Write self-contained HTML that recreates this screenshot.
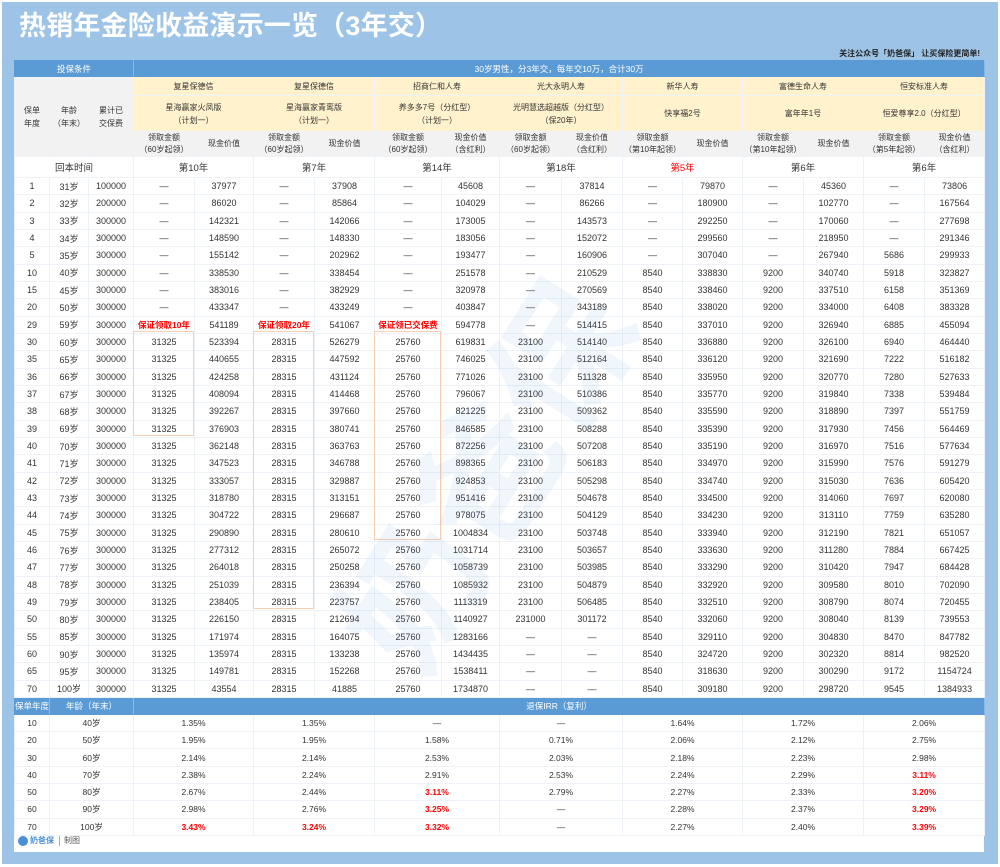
<!DOCTYPE html>
<html><head><meta charset="utf-8"><style>
*{margin:0;padding:0;box-sizing:border-box}
body{width:1000px;height:867px;background:#fff;font-family:"Liberation Sans","Noto Sans CJK SC",sans-serif;position:relative;overflow:hidden}
#bg{position:absolute;left:2px;top:2px;width:996px;height:862px;background:#9dc3e6}
#title{position:absolute;left:19px;top:6px;color:#fff;font-size:27px;font-weight:bold;line-height:40px;letter-spacing:0.2px}
#note{position:absolute;right:20px;top:48px;font-size:8px;font-weight:bold;color:#222}
#panel{position:absolute;left:14px;top:60px;width:970px;height:792px;background:#fff}
table{border-collapse:collapse;table-layout:fixed;width:970px;position:absolute;left:0;top:0}
td{border:1px solid #edf2f8;text-align:center;font-size:9px;color:#333;padding:0;overflow:hidden;white-space:nowrap}
tr.d td{height:17.33px}
.bh td{background:#5b9bd5;color:#fff;font-size:8.5px;border-color:#5b9bd5;border-right-color:#8db8e3}
.cr{background:#fff2cc;font-size:8px}
.gr{background:#f2f2f2;font-size:8px;line-height:12px}
.lh{background:#f2f2f2;font-size:8px;line-height:13px}
.r{color:#f00}
.rb{color:#f00;font-weight:bold;font-size:8.5px}
.hb td{font-size:9.5px;height:21px}
.ir td{height:17.3px;font-size:8.5px}
.box{position:absolute;border:1px solid #f6cfb2}
#wm{position:absolute;left:270px;top:370px;font-size:140px;font-weight:bold;color:rgba(91,155,213,0.09);transform:rotate(-58deg);white-space:nowrap;pointer-events:none}
</style></head><body>
<div id="bg"></div>
<div id="title">热销年金险收益演示一览（3年交）</div>
<div id="note">关注公众号「奶爸保」 让买保险更简单!</div>
<div id="panel">
<table>
<colgroup><col style="width:35px"><col style="width:39px"><col style="width:45px"><col style="width:61px"><col style="width:59px"><col style="width:61px"><col style="width:60px"><col style="width:67px"><col style="width:58px"><col style="width:62px"><col style="width:61px"><col style="width:60px"><col style="width:60px"><col style="width:61px"><col style="width:60px"><col style="width:61px"><col style="width:60px"></colgroup>
<tr class="bh" style="height:16px"><td colspan="3">投保条件</td><td colspan="14">30岁男性，分3年交，每年交10万，合计30万</td></tr>
<tr style="height:19px"><td rowspan="3" class="lh">保单<br>年度</td><td rowspan="3" class="lh">年龄<br>（年末）</td><td rowspan="3" class="lh">累计已<br>交保费</td><td colspan="2" class="cr">复星保德信</td><td colspan="2" class="cr">复星保德信</td><td colspan="2" class="cr">招商仁和人寿</td><td colspan="2" class="cr">光大永明人寿</td><td colspan="2" class="cr">新华人寿</td><td colspan="2" class="cr">富德生命人寿</td><td colspan="2" class="cr">恒安标准人寿</td></tr>
<tr style="height:36px"><td colspan="2" class="cr" style="line-height:13px">星海赢家火凤版<br>（计划一）</td><td colspan="2" class="cr" style="line-height:13px">星海赢家青鸾版<br>（计划一）</td><td colspan="2" class="cr" style="line-height:13px">养多多7号（分红型）<br>（计划一）</td><td colspan="2" class="cr" style="line-height:13px">光明慧选超越版（分红型）<br>（保20年）</td><td colspan="2" class="cr">快享福2号</td><td colspan="2" class="cr">富年年1号</td><td colspan="2" class="cr">恒爱尊享2.0（分红型）</td></tr>
<tr style="height:25px"><td class="gr">领取金额<br>（60岁起领）</td><td class="gr">现金价值</td><td class="gr">领取金额<br>（60岁起领）</td><td class="gr">现金价值</td><td class="gr">领取金额<br>（60岁起领）</td><td class="gr">现金价值<br>（含红利）</td><td class="gr">领取金额<br>（60岁起领）</td><td class="gr">现金价值<br>（含红利）</td><td class="gr">领取金额<br>（第10年起领）</td><td class="gr">现金价值</td><td class="gr">领取金额<br>（第10年起领）</td><td class="gr">现金价值</td><td class="gr">领取金额<br>（第5年起领）</td><td class="gr">现金价值<br>（含红利）</td></tr>
<tr class="hb"><td colspan="3">回本时间</td><td colspan="2">第10年</td><td colspan="2">第7年</td><td colspan="2">第14年</td><td colspan="2">第18年</td><td colspan="2" class="r">第5年</td><td colspan="2">第6年</td><td colspan="2">第6年</td></tr>
<tr class="d"><td>1</td><td>31岁</td><td>100000</td><td>—</td><td>37977</td><td>—</td><td>37908</td><td>—</td><td>45608</td><td>—</td><td>37814</td><td>—</td><td>79870</td><td>—</td><td>45360</td><td>—</td><td>73806</td></tr>
<tr class="d"><td>2</td><td>32岁</td><td>200000</td><td>—</td><td>86020</td><td>—</td><td>85864</td><td>—</td><td>104029</td><td>—</td><td>86266</td><td>—</td><td>180900</td><td>—</td><td>102770</td><td>—</td><td>167564</td></tr>
<tr class="d"><td>3</td><td>33岁</td><td>300000</td><td>—</td><td>142321</td><td>—</td><td>142066</td><td>—</td><td>173005</td><td>—</td><td>143573</td><td>—</td><td>292250</td><td>—</td><td>170060</td><td>—</td><td>277698</td></tr>
<tr class="d"><td>4</td><td>34岁</td><td>300000</td><td>—</td><td>148590</td><td>—</td><td>148330</td><td>—</td><td>183056</td><td>—</td><td>152072</td><td>—</td><td>299560</td><td>—</td><td>218950</td><td>—</td><td>291346</td></tr>
<tr class="d"><td>5</td><td>35岁</td><td>300000</td><td>—</td><td>155142</td><td>—</td><td>202962</td><td>—</td><td>193477</td><td>—</td><td>160906</td><td>—</td><td>307040</td><td>—</td><td>267940</td><td>5686</td><td>299933</td></tr>
<tr class="d"><td>10</td><td>40岁</td><td>300000</td><td>—</td><td>338530</td><td>—</td><td>338454</td><td>—</td><td>251578</td><td>—</td><td>210529</td><td>8540</td><td>338830</td><td>9200</td><td>340740</td><td>5918</td><td>323827</td></tr>
<tr class="d"><td>15</td><td>45岁</td><td>300000</td><td>—</td><td>383016</td><td>—</td><td>382929</td><td>—</td><td>320978</td><td>—</td><td>270569</td><td>8540</td><td>338460</td><td>9200</td><td>337510</td><td>6158</td><td>351369</td></tr>
<tr class="d"><td>20</td><td>50岁</td><td>300000</td><td>—</td><td>433347</td><td>—</td><td>433249</td><td>—</td><td>403847</td><td>—</td><td>343189</td><td>8540</td><td>338020</td><td>9200</td><td>334000</td><td>6408</td><td>383328</td></tr>
<tr class="d"><td>29</td><td>59岁</td><td>300000</td><td class="rb">保证领取10年</td><td>541189</td><td class="rb">保证领取20年</td><td>541067</td><td class="rb">保证领已交保费</td><td>594778</td><td>—</td><td>514415</td><td>8540</td><td>337010</td><td>9200</td><td>326940</td><td>6885</td><td>455094</td></tr>
<tr class="d"><td>30</td><td>60岁</td><td>300000</td><td>31325</td><td>523394</td><td>28315</td><td>526279</td><td>25760</td><td>619831</td><td>23100</td><td>514140</td><td>8540</td><td>336880</td><td>9200</td><td>326100</td><td>6940</td><td>464440</td></tr>
<tr class="d"><td>35</td><td>65岁</td><td>300000</td><td>31325</td><td>440655</td><td>28315</td><td>447592</td><td>25760</td><td>746025</td><td>23100</td><td>512164</td><td>8540</td><td>336120</td><td>9200</td><td>321690</td><td>7222</td><td>516182</td></tr>
<tr class="d"><td>36</td><td>66岁</td><td>300000</td><td>31325</td><td>424258</td><td>28315</td><td>431124</td><td>25760</td><td>771026</td><td>23100</td><td>511328</td><td>8540</td><td>335950</td><td>9200</td><td>320770</td><td>7280</td><td>527633</td></tr>
<tr class="d"><td>37</td><td>67岁</td><td>300000</td><td>31325</td><td>408094</td><td>28315</td><td>414468</td><td>25760</td><td>796067</td><td>23100</td><td>510386</td><td>8540</td><td>335770</td><td>9200</td><td>319840</td><td>7338</td><td>539484</td></tr>
<tr class="d"><td>38</td><td>68岁</td><td>300000</td><td>31325</td><td>392267</td><td>28315</td><td>397660</td><td>25760</td><td>821225</td><td>23100</td><td>509362</td><td>8540</td><td>335590</td><td>9200</td><td>318890</td><td>7397</td><td>551759</td></tr>
<tr class="d"><td>39</td><td>69岁</td><td>300000</td><td>31325</td><td>376903</td><td>28315</td><td>380741</td><td>25760</td><td>846585</td><td>23100</td><td>508288</td><td>8540</td><td>335390</td><td>9200</td><td>317930</td><td>7456</td><td>564469</td></tr>
<tr class="d"><td>40</td><td>70岁</td><td>300000</td><td>31325</td><td>362148</td><td>28315</td><td>363763</td><td>25760</td><td>872256</td><td>23100</td><td>507208</td><td>8540</td><td>335190</td><td>9200</td><td>316970</td><td>7516</td><td>577634</td></tr>
<tr class="d"><td>41</td><td>71岁</td><td>300000</td><td>31325</td><td>347523</td><td>28315</td><td>346788</td><td>25760</td><td>898365</td><td>23100</td><td>506183</td><td>8540</td><td>334970</td><td>9200</td><td>315990</td><td>7576</td><td>591279</td></tr>
<tr class="d"><td>42</td><td>72岁</td><td>300000</td><td>31325</td><td>333057</td><td>28315</td><td>329887</td><td>25760</td><td>924853</td><td>23100</td><td>505298</td><td>8540</td><td>334740</td><td>9200</td><td>315030</td><td>7636</td><td>605420</td></tr>
<tr class="d"><td>43</td><td>73岁</td><td>300000</td><td>31325</td><td>318780</td><td>28315</td><td>313151</td><td>25760</td><td>951416</td><td>23100</td><td>504678</td><td>8540</td><td>334500</td><td>9200</td><td>314060</td><td>7697</td><td>620080</td></tr>
<tr class="d"><td>44</td><td>74岁</td><td>300000</td><td>31325</td><td>304722</td><td>28315</td><td>296687</td><td>25760</td><td>978075</td><td>23100</td><td>504129</td><td>8540</td><td>334230</td><td>9200</td><td>313110</td><td>7759</td><td>635280</td></tr>
<tr class="d"><td>45</td><td>75岁</td><td>300000</td><td>31325</td><td>290890</td><td>28315</td><td>280610</td><td>25760</td><td>1004834</td><td>23100</td><td>503748</td><td>8540</td><td>333940</td><td>9200</td><td>312190</td><td>7821</td><td>651057</td></tr>
<tr class="d"><td>46</td><td>76岁</td><td>300000</td><td>31325</td><td>277312</td><td>28315</td><td>265072</td><td>25760</td><td>1031714</td><td>23100</td><td>503657</td><td>8540</td><td>333630</td><td>9200</td><td>311280</td><td>7884</td><td>667425</td></tr>
<tr class="d"><td>47</td><td>77岁</td><td>300000</td><td>31325</td><td>264018</td><td>28315</td><td>250258</td><td>25760</td><td>1058739</td><td>23100</td><td>503985</td><td>8540</td><td>333290</td><td>9200</td><td>310420</td><td>7947</td><td>684428</td></tr>
<tr class="d"><td>48</td><td>78岁</td><td>300000</td><td>31325</td><td>251039</td><td>28315</td><td>236394</td><td>25760</td><td>1085932</td><td>23100</td><td>504879</td><td>8540</td><td>332920</td><td>9200</td><td>309580</td><td>8010</td><td>702090</td></tr>
<tr class="d"><td>49</td><td>79岁</td><td>300000</td><td>31325</td><td>238405</td><td>28315</td><td>223757</td><td>25760</td><td>1113319</td><td>23100</td><td>506485</td><td>8540</td><td>332510</td><td>9200</td><td>308790</td><td>8074</td><td>720455</td></tr>
<tr class="d"><td>50</td><td>80岁</td><td>300000</td><td>31325</td><td>226150</td><td>28315</td><td>212694</td><td>25760</td><td>1140927</td><td>231000</td><td>301172</td><td>8540</td><td>332060</td><td>9200</td><td>308040</td><td>8139</td><td>739553</td></tr>
<tr class="d"><td>55</td><td>85岁</td><td>300000</td><td>31325</td><td>171974</td><td>28315</td><td>164075</td><td>25760</td><td>1283166</td><td>—</td><td>—</td><td>8540</td><td>329110</td><td>9200</td><td>304830</td><td>8470</td><td>847782</td></tr>
<tr class="d"><td>60</td><td>90岁</td><td>300000</td><td>31325</td><td>135974</td><td>28315</td><td>133238</td><td>25760</td><td>1434435</td><td>—</td><td>—</td><td>8540</td><td>324720</td><td>9200</td><td>302320</td><td>8814</td><td>982520</td></tr>
<tr class="d"><td>65</td><td>95岁</td><td>300000</td><td>31325</td><td>149781</td><td>28315</td><td>152268</td><td>25760</td><td>1538411</td><td>—</td><td>—</td><td>8540</td><td>318630</td><td>9200</td><td>300290</td><td>9172</td><td>1154724</td></tr>
<tr class="d"><td>70</td><td>100岁</td><td>300000</td><td>31325</td><td>43554</td><td>28315</td><td>41885</td><td>25760</td><td>1734870</td><td>—</td><td>—</td><td>8540</td><td>309180</td><td>9200</td><td>298720</td><td>9545</td><td>1384933</td></tr>
<tr class="bh" style="height:17px"><td>保单年度</td><td colspan="2">年龄（年末）</td><td colspan="14">退保IRR（复利）</td></tr>
<tr class="ir"><td>10</td><td colspan="2">40岁</td><td colspan="2">1.35%</td><td colspan="2">1.35%</td><td colspan="2">—</td><td colspan="2">—</td><td colspan="2">1.64%</td><td colspan="2">1.72%</td><td colspan="2">2.06%</td></tr>
<tr class="ir"><td>20</td><td colspan="2">50岁</td><td colspan="2">1.95%</td><td colspan="2">1.95%</td><td colspan="2">1.58%</td><td colspan="2">0.71%</td><td colspan="2">2.06%</td><td colspan="2">2.12%</td><td colspan="2">2.75%</td></tr>
<tr class="ir"><td>30</td><td colspan="2">60岁</td><td colspan="2">2.14%</td><td colspan="2">2.14%</td><td colspan="2">2.53%</td><td colspan="2">2.03%</td><td colspan="2">2.18%</td><td colspan="2">2.23%</td><td colspan="2">2.98%</td></tr>
<tr class="ir"><td>40</td><td colspan="2">70岁</td><td colspan="2">2.38%</td><td colspan="2">2.24%</td><td colspan="2">2.91%</td><td colspan="2">2.53%</td><td colspan="2">2.24%</td><td colspan="2">2.29%</td><td colspan="2" class="rb">3.11%</td></tr>
<tr class="ir"><td>50</td><td colspan="2">80岁</td><td colspan="2">2.67%</td><td colspan="2">2.44%</td><td colspan="2" class="rb">3.11%</td><td colspan="2">2.79%</td><td colspan="2">2.27%</td><td colspan="2">2.33%</td><td colspan="2" class="rb">3.20%</td></tr>
<tr class="ir"><td>60</td><td colspan="2">90岁</td><td colspan="2">2.98%</td><td colspan="2">2.76%</td><td colspan="2" class="rb">3.25%</td><td colspan="2">—</td><td colspan="2">2.28%</td><td colspan="2">2.37%</td><td colspan="2" class="rb">3.29%</td></tr>
<tr class="ir"><td>70</td><td colspan="2">100岁</td><td colspan="2" class="rb">3.43%</td><td colspan="2" class="rb">3.24%</td><td colspan="2" class="rb">3.32%</td><td colspan="2">—</td><td colspan="2">2.27%</td><td colspan="2">2.40%</td><td colspan="2" class="rb">3.39%</td></tr>
</table>
<div class="box" style="left:119px;top:271px;width:61px;height:105px"></div>
<div class="box" style="left:239px;top:271px;width:61px;height:278px"></div>
<div class="box" style="left:360px;top:271px;width:67px;height:209px"></div>
<div style="position:absolute;left:4px;top:775px;display:flex;align-items:center;font-size:8px;color:#555">
<div style="width:10px;height:10px;border-radius:50%;background:#4a8fd8"></div>
<span style="color:#4a8fd8;font-weight:bold;margin-left:2px">奶爸保</span>
<span style="border-left:1px solid #aaa;height:10px;margin:0 4px 0 5px"></span>制图</div>
</div>
<div id="wm">奶爸保</div>
</body></html>
